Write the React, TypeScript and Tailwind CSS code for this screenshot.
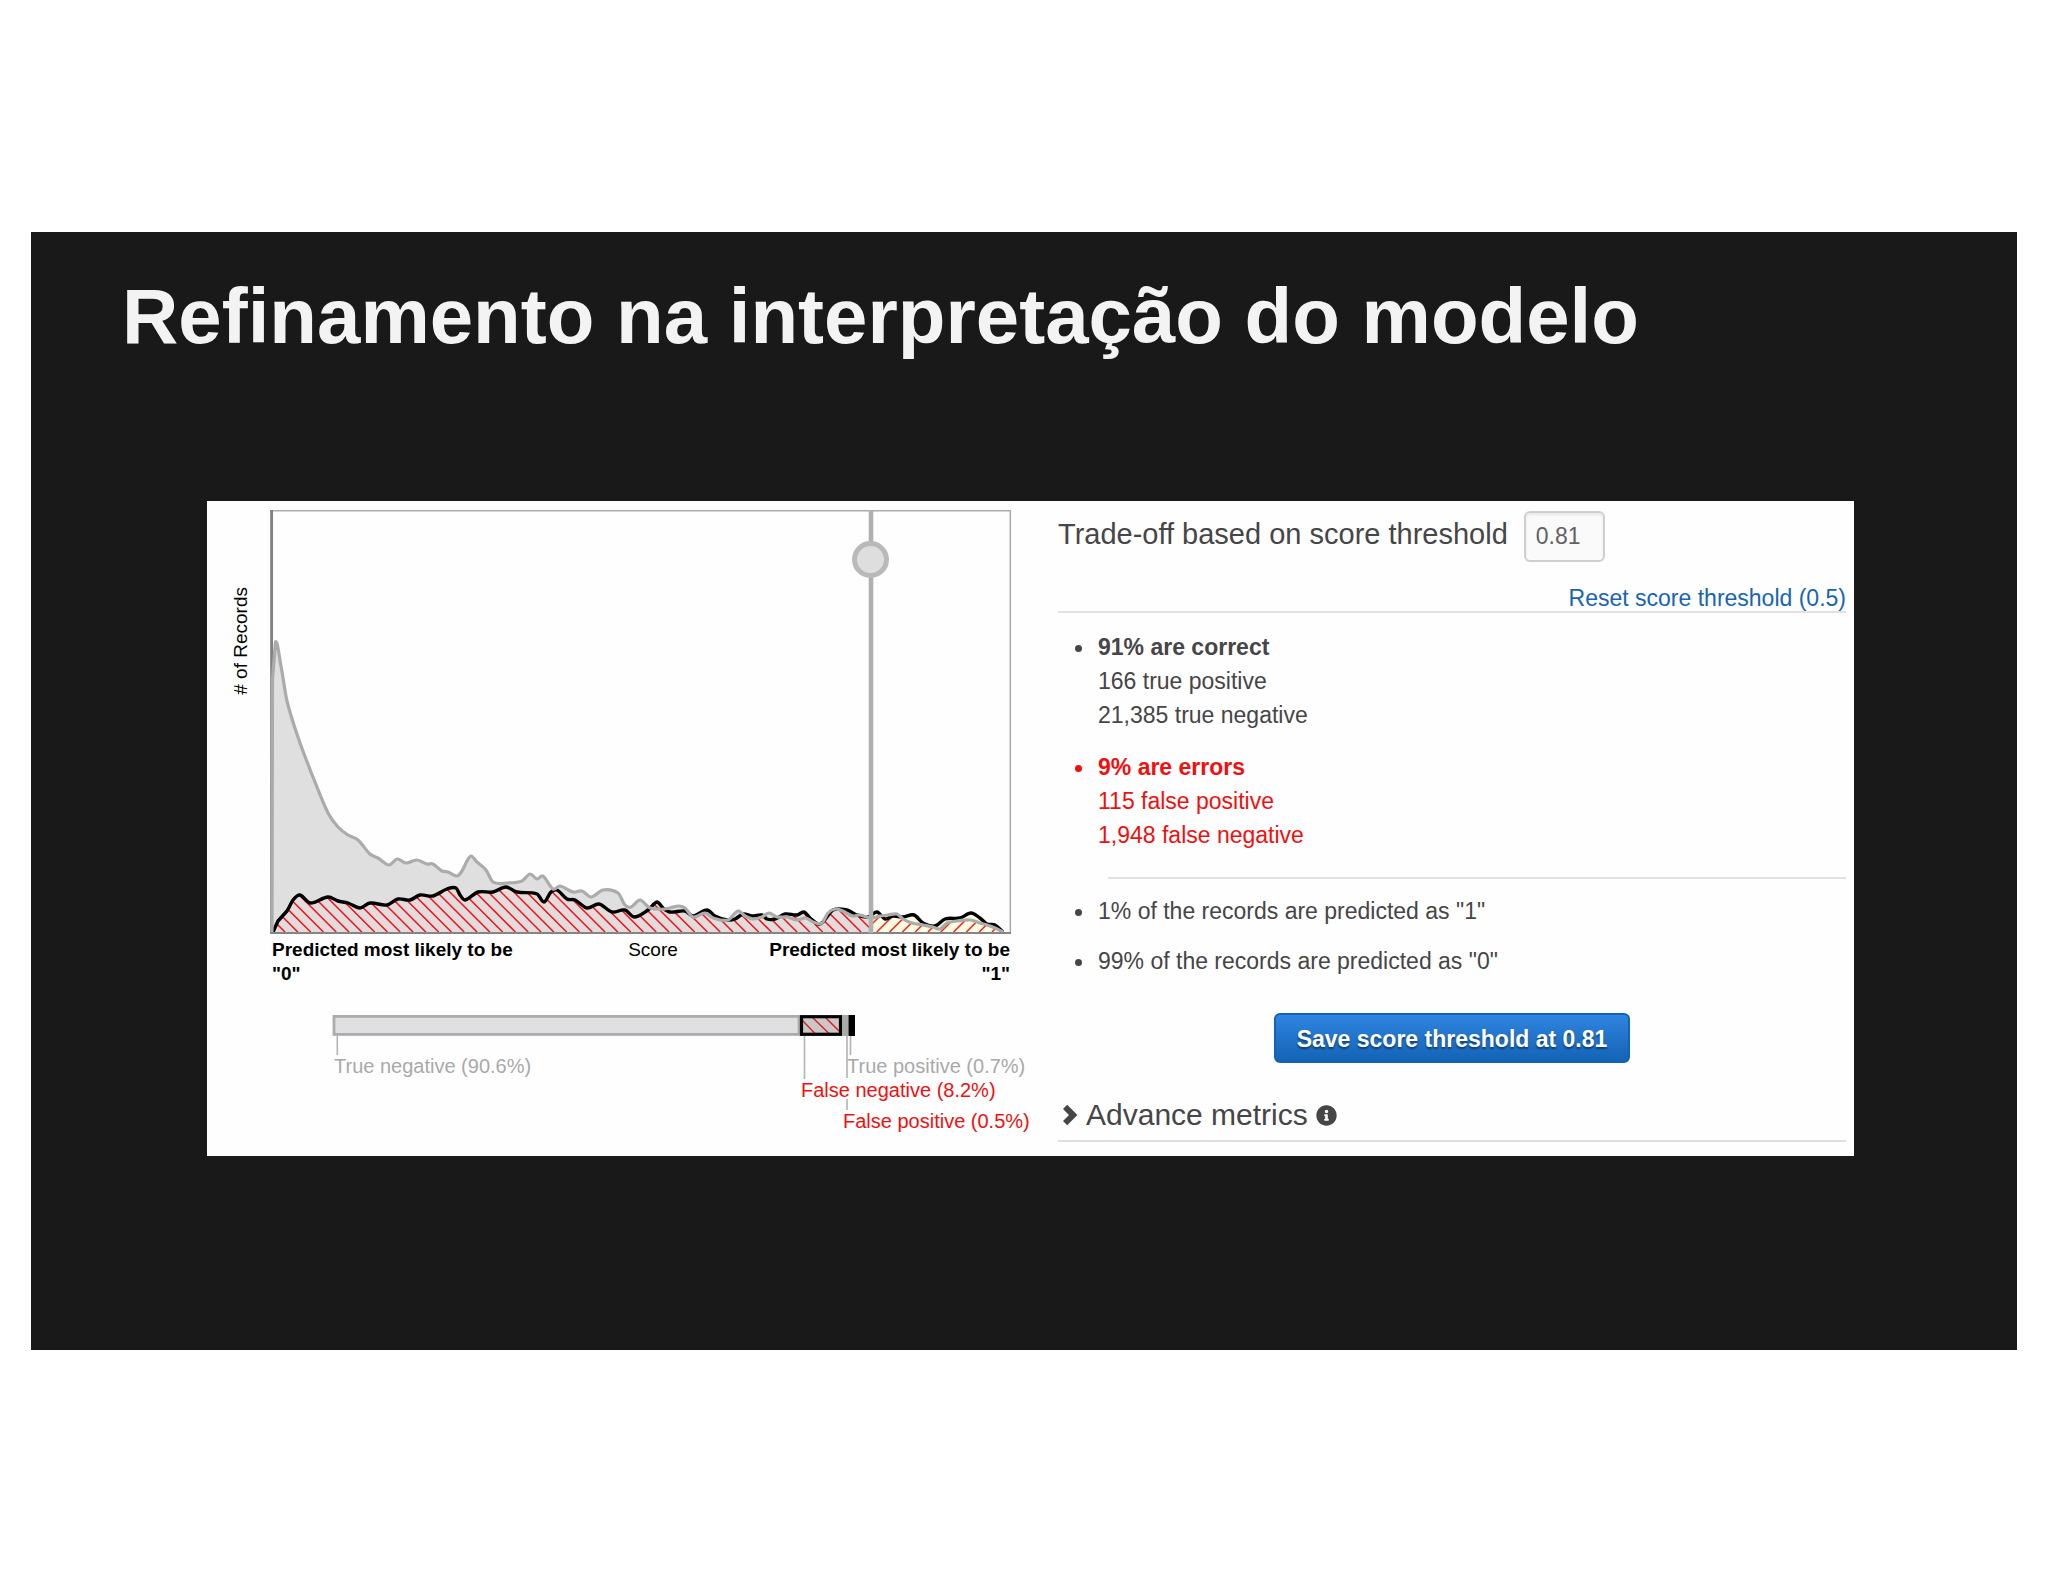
import React, { useState } from 'react'
import { FaInfoCircle } from 'react-icons/fa'
import { clsx } from 'clsx'

type Point = [number, number]

const BASELINE = 423
const THRESHOLD_X = 601
const HATCH_STEP = 12.8

// records whose real answer is "0"
const NEGATIVES: Point[] = [
  [2, 423], [2.5, 170], [5.5, 133], [11, 157], [17, 192], [29, 231], [43, 268], [58, 304], [68, 318],
  [78, 326], [88, 331], [100, 345], [108, 349], [119, 356], [127, 350], [136, 354], [147, 351],
  [157, 355], [163, 355], [172, 362], [178, 363], [187, 367], [192, 362], [197, 352], [201, 347], [207, 353], [216, 361],
  [223, 373], [237, 374], [252, 372], [260, 365], [267, 370], [273, 367], [283, 380], [290, 377], [303, 383], [312, 382],
  [321, 388], [333, 381], [348, 384], [355, 396], [361, 398], [370, 391], [380, 399], [395, 400], [408, 397], [415, 399],
  [423, 408], [435, 404], [443, 409], [458, 411], [468, 402], [475, 407], [483, 410], [492, 408], [499, 404], [507, 408],
  [517, 408], [527, 411], [536, 409], [543, 413], [552, 414], [558, 404], [565, 400], [573, 402], [582, 407], [590, 406],
  [601, 409], [610, 407], [618, 406], [627, 405], [633, 410], [642, 414], [653, 416], [663, 418], [670, 420], [677, 414],
  [687, 412], [700, 411], [710, 414], [717, 416], [725, 419], [733, 423],
]

// records whose real answer is "1"
const POSITIVES: Point[] = [
  [3, 423], [8, 412], [17, 402], [23, 391], [30, 386], [40, 394], [58, 388], [68, 392], [78, 394], [90, 399],
  [100, 394], [117, 396], [128, 390], [140, 391], [150, 386], [163, 387], [177, 380], [186, 379], [190, 386], [195, 391],
  [208, 383], [223, 383], [236, 378], [247, 383], [267, 385], [274, 393], [281, 383], [287, 381], [297, 390], [305, 391],
  [317, 399], [329, 395], [342, 403], [355, 401], [364, 408], [378, 401], [387, 393], [393, 399], [400, 403], [415, 402],
  [423, 407], [437, 401], [445, 407], [457, 411], [465, 410], [473, 405], [482, 407], [492, 406], [497, 410], [505, 410],
  [515, 405], [527, 406], [534, 403], [540, 409], [548, 415], [553, 413], [563, 401], [577, 401], [587, 406], [598, 408],
  [607, 403], [615, 410], [623, 407], [633, 408], [644, 406], [653, 414], [665, 417], [675, 410], [690, 409], [701, 404],
  [710, 409], [717, 415], [725, 416], [733, 423],
]

// smooth line through the points, control points kept between neighbours
function curve(points: Point[]) {
  let d = `M${points[0][0]} ${points[0][1]}`
  for (let i = 0; i < points.length - 1; i++) {
    const a = points[i - 1] ?? points[i]
    const b = points[i]
    const c = points[i + 1]
    const e = points[i + 2] ?? c
    const width = c[0] - b[0]
    const slopeIn = (c[1] - a[1]) / (c[0] - a[0])
    const slopeOut = (e[1] - b[1]) / (e[0] - b[0])
    if (i < 2) {
      d += `L${c[0]} ${c[1]}`
    } else {
      d += `C${b[0] + width / 3} ${b[1] + (slopeIn * width) / 3} ${c[0] - width / 3} ${c[1] - (slopeOut * width) / 3} ${c[0]} ${c[1]}`
    }
  }
  return d
}

// 45 degree strokes standing on the baseline
function hatch(from: number, count: number, lean: -1 | 1) {
  return Array.from({ length: count }, (_, i) => `M${from + i * HATCH_STEP} ${BASELINE}l${60 * lean} -60`).join('')
}

const negativeLine = curve(NEGATIVES)
const positiveLine = curve(POSITIVES)
const negativeArea = `${negativeLine}V${BASELINE}Z`
const positiveArea = `${positiveLine}V${BASELINE}Z`

function ScorePlot() {
  return (
    <svg viewBox="0 0 742 426" className="block w-full" aria-hidden="true">
      <defs>
        <clipPath id="left-side"><rect x="0" y="0" width={THRESHOLD_X} height="426" /></clipPath>
        <clipPath id="right-side"><rect x={THRESHOLD_X} y="0" width="141" height="426" /></clipPath>
        <clipPath id="under-positives"><path d={positiveArea} /></clipPath>
        <clipPath id="under-negatives"><path d={negativeArea} /></clipPath>
      </defs>

      <path d="M0 1.7H741M740.3 1V423" fill="none" stroke="#acacac" strokeWidth="1.6" />
      <path d="M1.6 1V423" stroke="#808080" strokeWidth="2.8" />

      <g clipPath="url(#left-side)">
        <path d={negativeArea} fill="#dfdfdf" />
        <path d={positiveArea} fill="#e2dcdd" />
        <g clipPath="url(#under-positives)">
          <path d={hatch(15, 50, -1)} stroke="#fa0f14" strokeWidth="1.5" />
        </g>
      </g>
      <g clipPath="url(#right-side)">
        <path d={positiveArea} fill="#fdfbe4" />
        <path d={negativeArea} fill="#fdfbe4" />
        <g clipPath="url(#under-negatives)">
          <path d={hatch(594, 12, 1)} stroke="#fa2414" strokeWidth="1.5" />
        </g>
      </g>

      <path d={positiveLine} fill="none" stroke="#000" strokeWidth="3.4" strokeLinejoin="round" />
      <path d={negativeLine} fill="none" stroke="#ababab" strokeWidth="3.2" strokeLinejoin="round" />
      <path d="M0 424H741" stroke="#858585" strokeWidth="2" />
      <path d={`M${THRESHOLD_X} 1V424`} stroke="#b0b0b0" strokeWidth="4.6" />
    </svg>
  )
}

function Breakdown() {
  return (
    <svg
      viewBox="0 0 742 120"
      className="block w-full overflow-visible font-['Liberation_Sans',Arial,sans-serif] text-[20px]"
    >
      <rect x="64" y="3.4" width="465" height="18" fill="#e0dfe1" stroke="#acacac" strokeWidth="2.8" />
      <rect x="531.5" y="3.7" width="39" height="17.6" fill="#c9c7c8" />
      <path d="M532 7L545 20.5M542 4L559 20.5M555 4L570 19" stroke="#e0221f" strokeWidth="1.5" />
      <rect x="531.5" y="3.7" width="39" height="17.6" fill="none" stroke="#000" strokeWidth="3.2" />
      <rect x="572" y="2" width="7" height="21" fill="#a9a9a9" />
      <rect x="578.6" y="2" width="6.4" height="21" fill="#000" />
      <path d="M67.3 23V42M534.5 23V66M577 23V65M577 86V97M580.5 23V42" stroke="#b3b3b3" strokeWidth="1.6" />
      <text x="64" y="60" fill="#a9a9ab">True negative (90.6%)</text>
      <text x="577" y="60" fill="#a9a9ab">True positive (0.7%)</text>
      <text x="531" y="84" fill="#f0100f">False negative (8.2%)</text>
      <text x="573" y="115" fill="#f0100f">False positive (0.5%)</text>
    </svg>
  )
}

interface OutcomeProps {
  title?: string
  lines: string[]
  error?: boolean
  className?: string
}

function Outcome({ title, lines, error, className }: OutcomeProps) {
  return (
    <li className={clsx('flex gap-4', error ? 'text-[#f0100f]' : 'text-[#464547]', className)}>
      <span className="mt-[15px] size-[7px] shrink-0 rounded-full bg-current" />
      <div>
        {title && <p className="font-bold">{title}</p>}
        {lines.map((line) => <p key={line}>{line}</p>)}
      </div>
    </li>
  )
}

export default function App() {
  const [threshold, setThreshold] = useState('0.81')

  return (
    <main className="min-h-screen bg-white px-[31px] py-[232px] font-['Liberation_Sans',Arial,sans-serif]">
      <section className="bg-[#191919] pt-[45px] pr-[163px] pb-[194px] pl-44">
        <h1 className="-ml-[85px] text-[78px] leading-[78px] font-bold whitespace-nowrap text-[#f3f3f3]">
          Refinamento na interpretação do modelo
        </h1>

        <div className="mt-[146px] grid grid-cols-[851fr_796fr] bg-[#fefefe]">
          <div className="flex pt-2 pr-[46px] text-[19px] leading-6 text-black">
            <div className="w-[63px] shrink-0 pt-[78px] pl-[22px]">
              <span className="rotate-180 whitespace-nowrap [writing-mode:vertical-rl]"># of Records</span>
            </div>
            <div className="min-w-0 flex-1">
              <div className="relative">
                <ScorePlot />
                <input
                  type="range"
                  aria-label="Score threshold"
                  min="0"
                  max="1"
                  step="0.01"
                  value={threshold}
                  onChange={(e) => setThreshold(e.target.value)}
                  className="absolute inset-x-[-18px] top-8 h-9 cursor-pointer appearance-none bg-transparent [&::-webkit-slider-thumb]:size-[37px] [&::-webkit-slider-thumb]:appearance-none [&::-webkit-slider-thumb]:rounded-full [&::-webkit-slider-thumb]:border-[5px] [&::-webkit-slider-thumb]:border-[#b9b9b9] [&::-webkit-slider-thumb]:bg-[#dedede]"
                />
              </div>
              <div className="mt-[3px] flex justify-between px-0.5">
                <p className="font-bold">Predicted most likely to be<br />"0"</p>
                <p className="pl-6">Score</p>
                <p className="text-right font-bold">Predicted most likely to be<br />"1"</p>
              </div>
              <div className="mt-[27px]">
                <Breakdown />
              </div>
            </div>
          </div>

          <div className="pt-[10px] pr-2 pb-[14px] text-[23px] leading-[34px] text-[#464547]">
            <div className="flex items-baseline gap-4">
              <label htmlFor="threshold" className="text-[29px] whitespace-nowrap">
                Trade-off based on score threshold
              </label>
              <input
                id="threshold"
                value={threshold}
                onChange={(e) => setThreshold(e.target.value)}
                className="h-[51px] w-[81px] rounded-md border-2 border-[#cfcfcf] bg-[#fafafa] px-[10px] text-[#626262] shadow-[inset_0_2px_3px_rgba(0,0,0,0.08)]"
              />
            </div>
            <div className="mt-[23px] border-b-2 border-[#e2e2e2] text-right leading-[26px]">
              <a href="#reset" className="text-[#1765b3]">Reset score threshold (0.5)</a>
            </div>

            <ul className="mt-[17px] pl-[17px]">
              <Outcome title="91% are correct" lines={['166 true positive', '21,385 true negative']} />
              <Outcome error title="9% are errors" lines={['115 false positive', '1,948 false negative']} className="mt-[18px]" />
            </ul>
            <hr className="mt-[25px] ml-[50px] border-t-2 border-[#e2e1e3]" />
            <ul className="mt-[15px] pl-[17px]">
              <Outcome lines={['1% of the records are predicted as "1"']} />
              <Outcome lines={['99% of the records are predicted as "0"']} className="mt-4" />
            </ul>

            <div className="mt-[35px] flex justify-center">
              <button className="h-[50px] rounded-md border-2 border-[#1262b5] bg-linear-to-b from-[#2f85df] to-[#1363b6] px-[21px] pt-0.5 leading-6 font-bold text-white [text-shadow:0_2px_2px_rgba(0,0,0,0.45)]">
                Save score threshold at 0.81
              </button>
            </div>

            <div className="mt-[34px] border-b-2 border-[#dedede] pb-[7px]">
              <button className="flex items-center gap-2 pl-1 text-[30px] leading-9">
                <svg viewBox="0 0 16 22" className="h-[22px] w-4" aria-hidden="true">
                  <path d="M5.2 .8L15.4 11L5.2 21.2L1 17L7 11L1 5Z" fill="currentColor" />
                </svg>
                Advance metrics
                <FaInfoCircle className="size-[21px]" />
              </button>
            </div>
          </div>
        </div>
      </section>
    </main>
  )
}
